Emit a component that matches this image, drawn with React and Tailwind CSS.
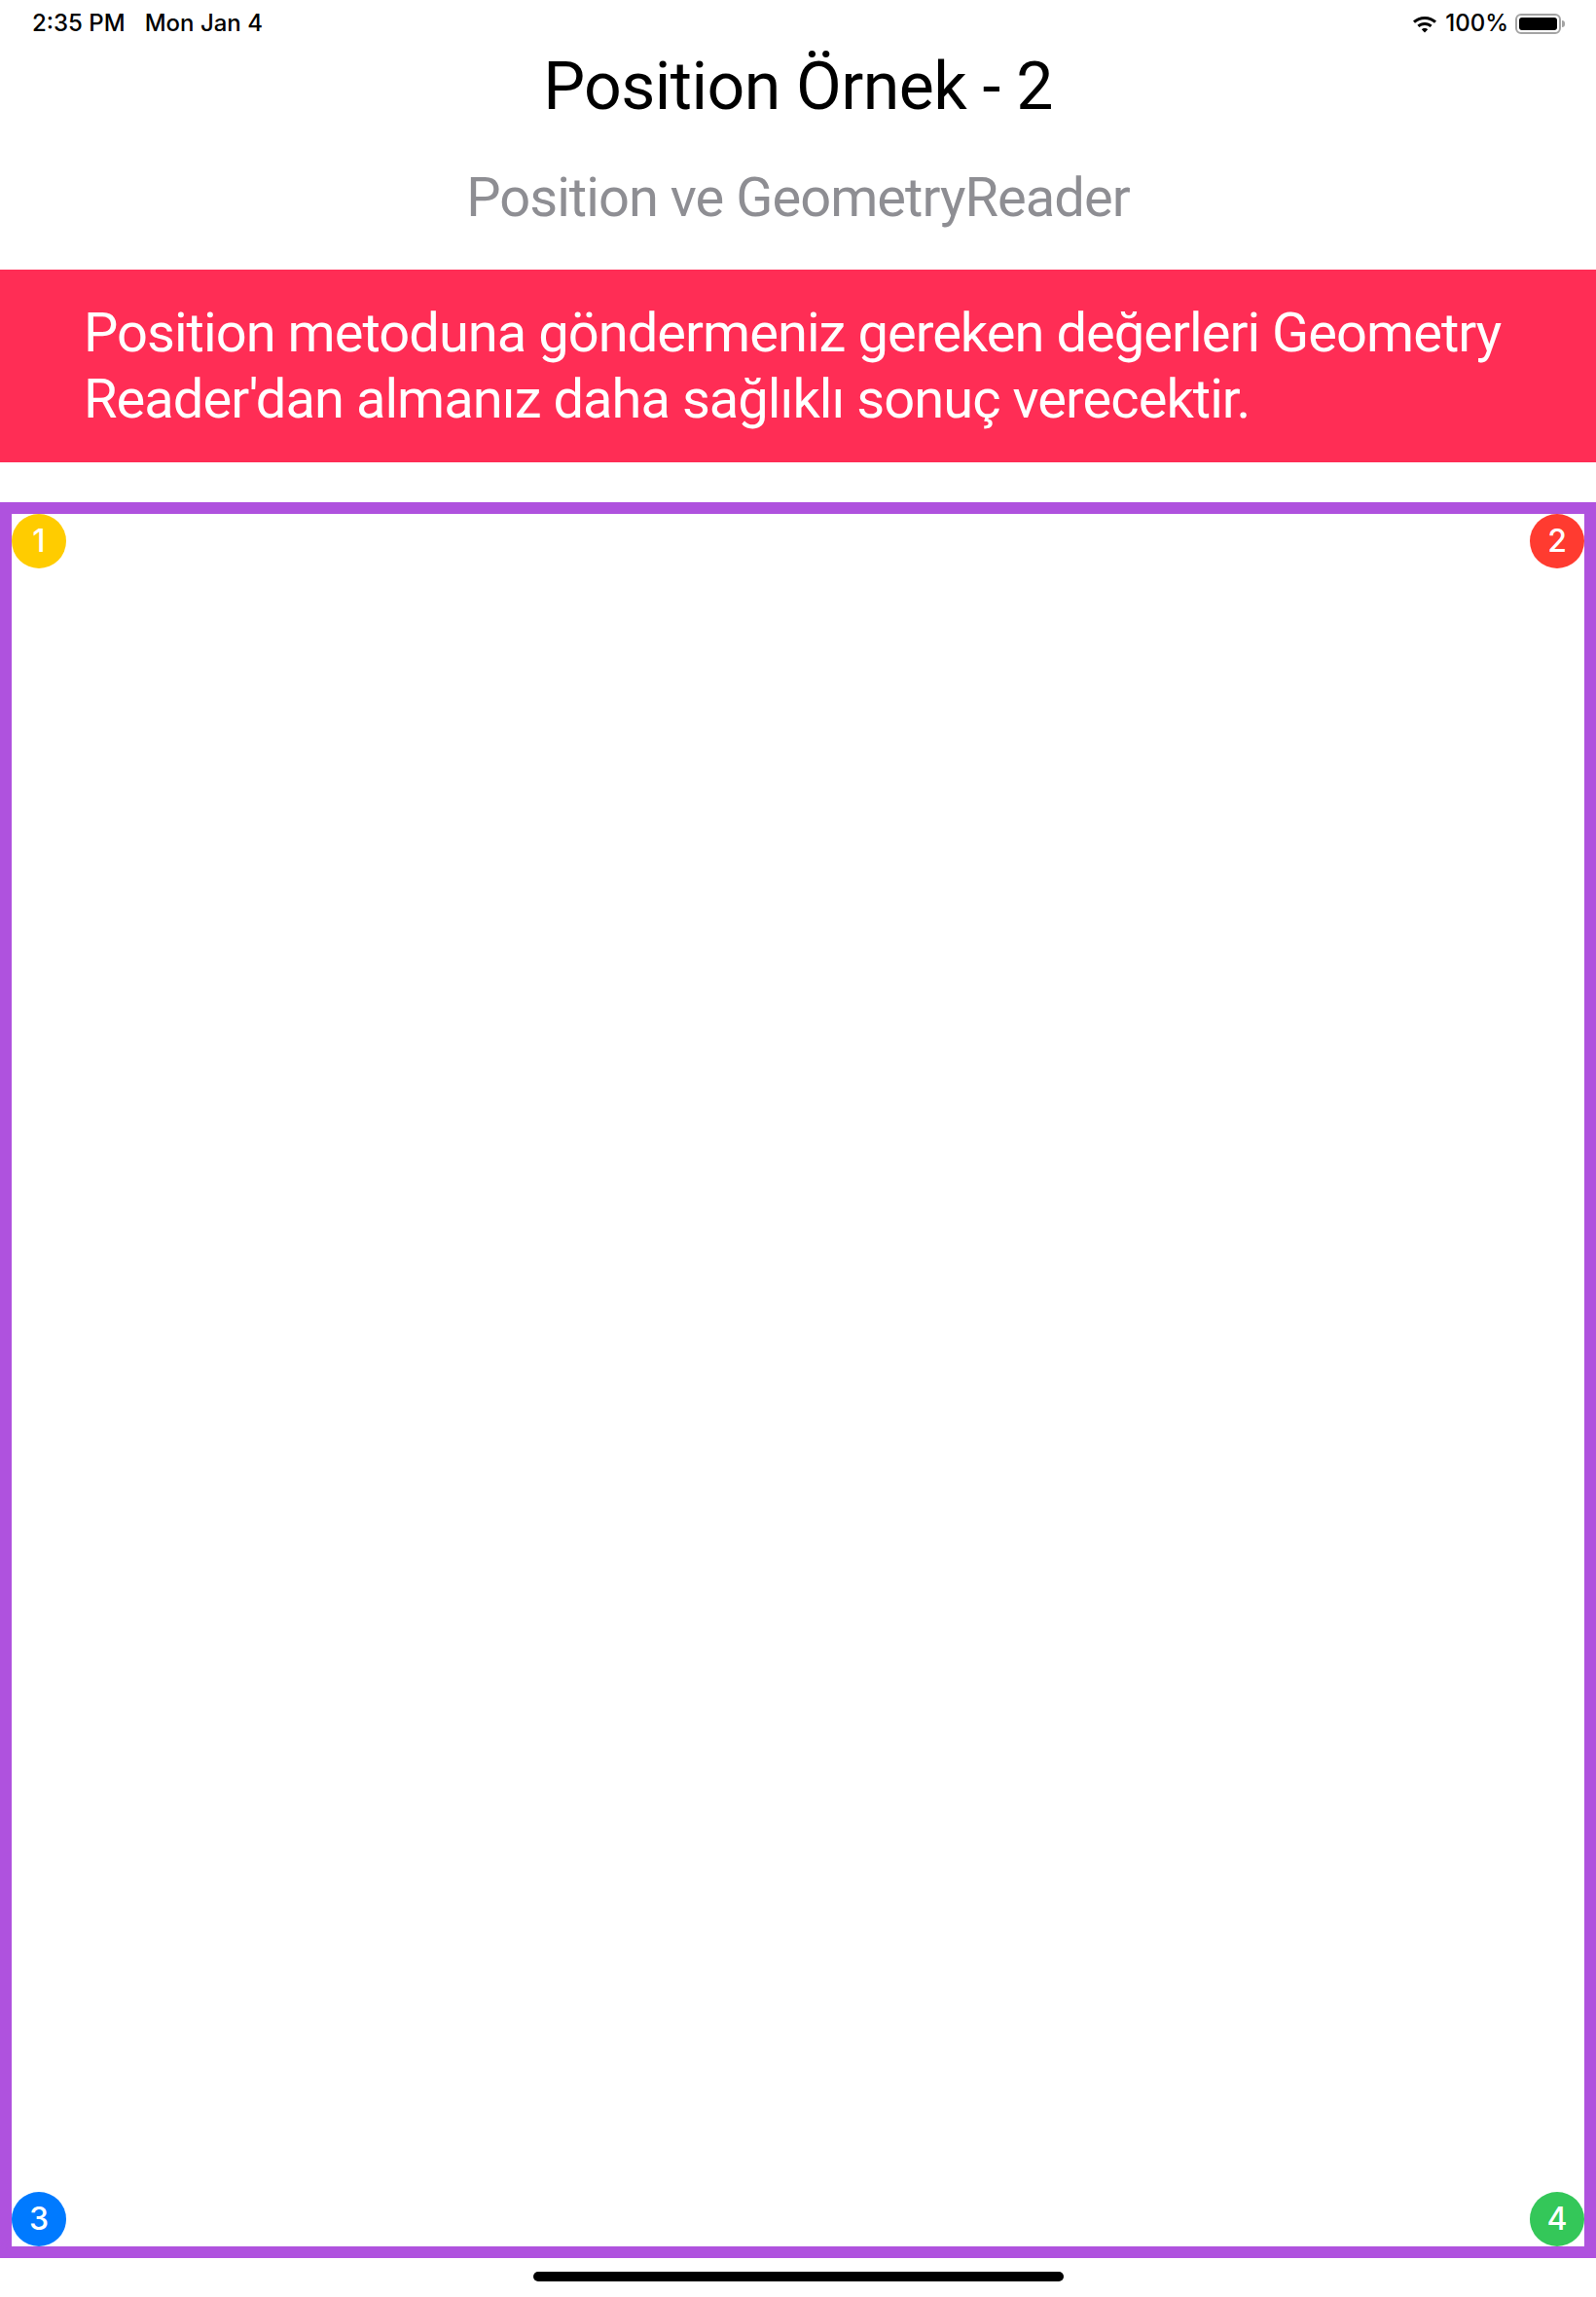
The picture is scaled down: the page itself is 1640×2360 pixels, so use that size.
import React from "react";

const Wifi = () => (
    <svg width="28" height="20" viewBox="0 0 28 20">
        <path d="M14 3C9.2 3 5.2 4.8 2 7.6L4 9.8C6.7 7.5 10.1 6 14 6s7.3 1.5 10 3.8l2-2.2C22.8 4.8 18.8 3 14 3z" fill="#000" />
        <path d="M14 9c-3 0-5.6 1.1-7.6 2.8l2 2.2c1.5-1.2 3.4-2 5.6-2s4.1.8 5.6 2l2-2.2C19.6 10.1 17 9 14 9z" fill="#000" />
        <path d="M14 15c-1.3 0-2.4.5-3.2 1.2L14 19.6l3.2-3.4C16.4 15.5 15.3 15 14 15z" fill="#000" />
    </svg>
);

const Battery = () => (
    <div className="flex items-center">
        <div className="w-[47px] h-[21px] rounded-[6px] border-[2px] border-[#a3a3a3] p-[2px]">
            <div className="w-full h-full rounded-[3px] bg-black"></div>
        </div>
        <div className="w-[3px] h-[7px] rounded-r-full bg-[#a3a3a3] ml-[1px]"></div>
    </div>
);

const Dot = ({ color, n }) => (
    <div className={`w-[56px] h-[56px] rounded-full flex items-center justify-center text-white text-[32px] font-medium leading-none ${color}`}>
        {n}
    </div>
);

const App = () => {
    return (
        <div className="w-[1640px] h-[2360px] bg-white font-['Inter','Noto_Sans',sans-serif] flex flex-col">
            {/* status bar */}
            <div className="h-[48px] flex items-center justify-between pl-[33px] pr-[32px] text-[24px] font-medium text-black">
                <div className="flex gap-[20px]">
                    <span>2:35 PM</span>
                    <span>Mon Jan 4</span>
                </div>
                <div className="flex items-center gap-[7px]">
                    <Wifi />
                    <span>100%</span>
                    <Battery />
                </div>
            </div>

            <div className="font-['Roboto','Noto_Sans',sans-serif]">
                <h1 className="text-center text-[68px] leading-[82px] tracking-[-0.008em] text-black">Position Örnek - 2</h1>
                <h2 className="text-center text-[56px] leading-[68px] tracking-[-0.017em] text-[#8e8e93] mt-[39px]">Position ve GeometryReader</h2>

                <div className="mt-[40px] bg-[#ff2d55] py-[31px] pl-[86px] pr-[32px]">
                    <p className="text-white text-[56px] leading-[68px] tracking-[-0.017em] whitespace-nowrap">
                        Position metoduna göndermeniz gereken değerleri Geometry
                        <br />
                        Reader'dan almanız daha sağlıklı sonuç verecektir.
                    </p>
                </div>
            </div>

            <div className="mt-[41px] h-[1804px] border-[12px] border-[#af52de] flex flex-col justify-between">
                <div className="flex justify-between">
                    <Dot color="bg-[#ffcc00]" n="1" />
                    <Dot color="bg-[#ff3b30]" n="2" />
                </div>
                <div className="flex justify-between">
                    <Dot color="bg-[#007aff]" n="3" />
                    <Dot color="bg-[#34c759]" n="4" />
                </div>
            </div>

            <div className="mt-[14px] mx-auto w-[545px] h-[10px] rounded-full bg-black"></div>
        </div>
    );
};

export default App;
